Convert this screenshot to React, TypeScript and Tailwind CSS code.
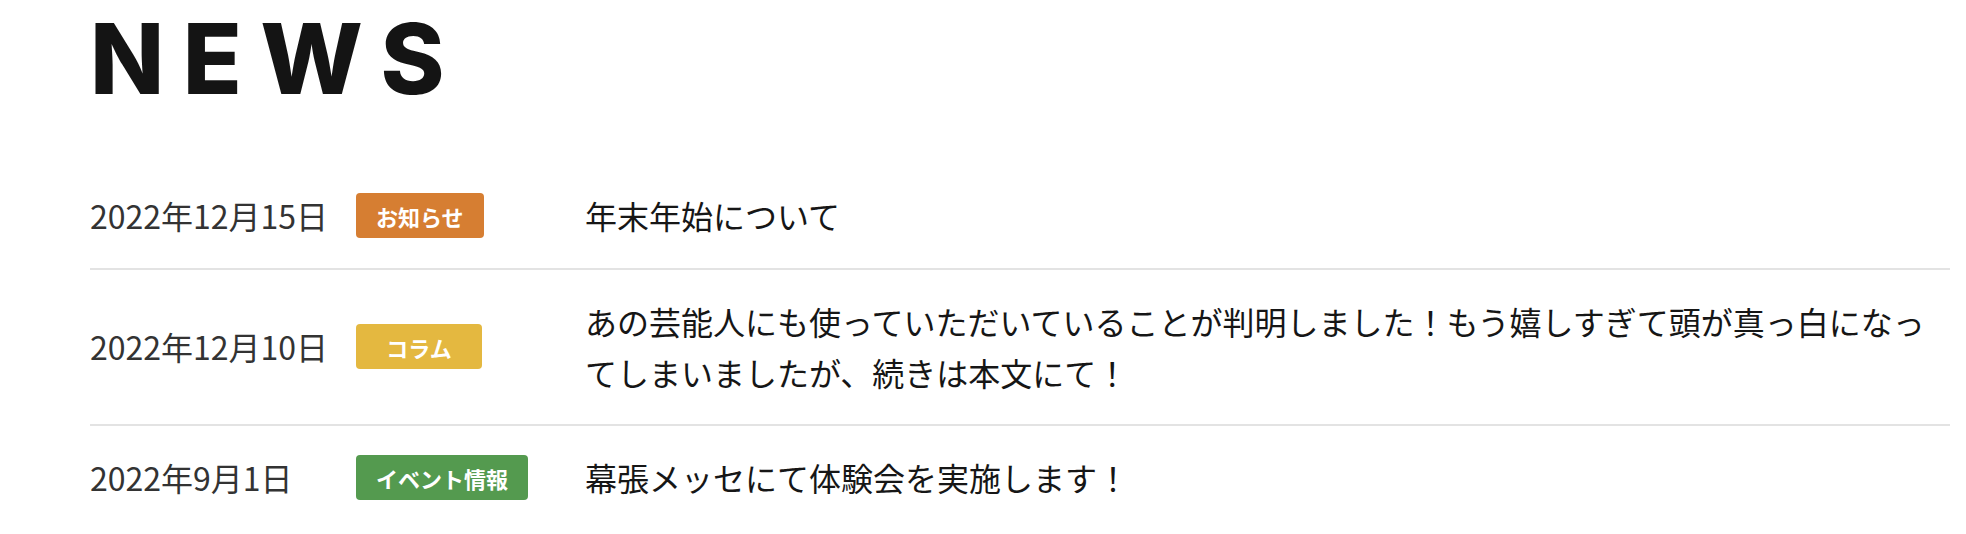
const news = [
  {
    date: '2022年12月15日',
    tag: 'お知らせ',
    color: 'bg-[#d67e32]',
    title: '年末年始について',
  },
  {
    date: '2022年12月10日',
    tag: 'コラム',
    color: 'bg-[#e4b840]',
    title:
      'あの芸能人にも使っていただいていることが判明しました！もう嬉しすぎて頭が真っ白になってしまいましたが、続きは本文にて！',
  },
  {
    date: '2022年9月1日',
    tag: 'イベント情報',
    color: 'bg-[#549a4f]',
    title: '幕張メッセにて体験会を実施します！',
  },
];

export default function App() {
  return (
    <div className="min-h-screen bg-white pl-[90px] pr-[16px] font-['Noto_Sans_CJK_JP',sans-serif]">
      <h1 className="font-['Inter',sans-serif] text-[97px] font-extrabold leading-[1.21] tracking-[0.19em] text-[#141414]">
        NEWS
      </h1>

      <ul className="mt-[47px]">
        {news.map((item, i) => (
          <li
            key={item.date}
            className={`flex items-center py-[26px] ${
              i < news.length - 1 ? 'border-b-2 border-[#e3e3e3]' : ''
            }`}
          >
            <div className="w-[266px] shrink-0 text-[32px] leading-[1.6] text-[#333333]">
              {item.date}
            </div>
            <div className="w-[229px] shrink-0">
              <span
                className={`inline-flex h-[45px] min-w-[126px] items-center justify-center rounded-[4px] px-[20px] text-[22px] font-bold leading-none text-white ${item.color}`}
              >
                {item.tag}
              </span>
            </div>
            <p className="flex-1 text-[32px] leading-[1.6] text-[#161616]">
              {item.title}
            </p>
          </li>
        ))}
      </ul>
    </div>
  );
}
